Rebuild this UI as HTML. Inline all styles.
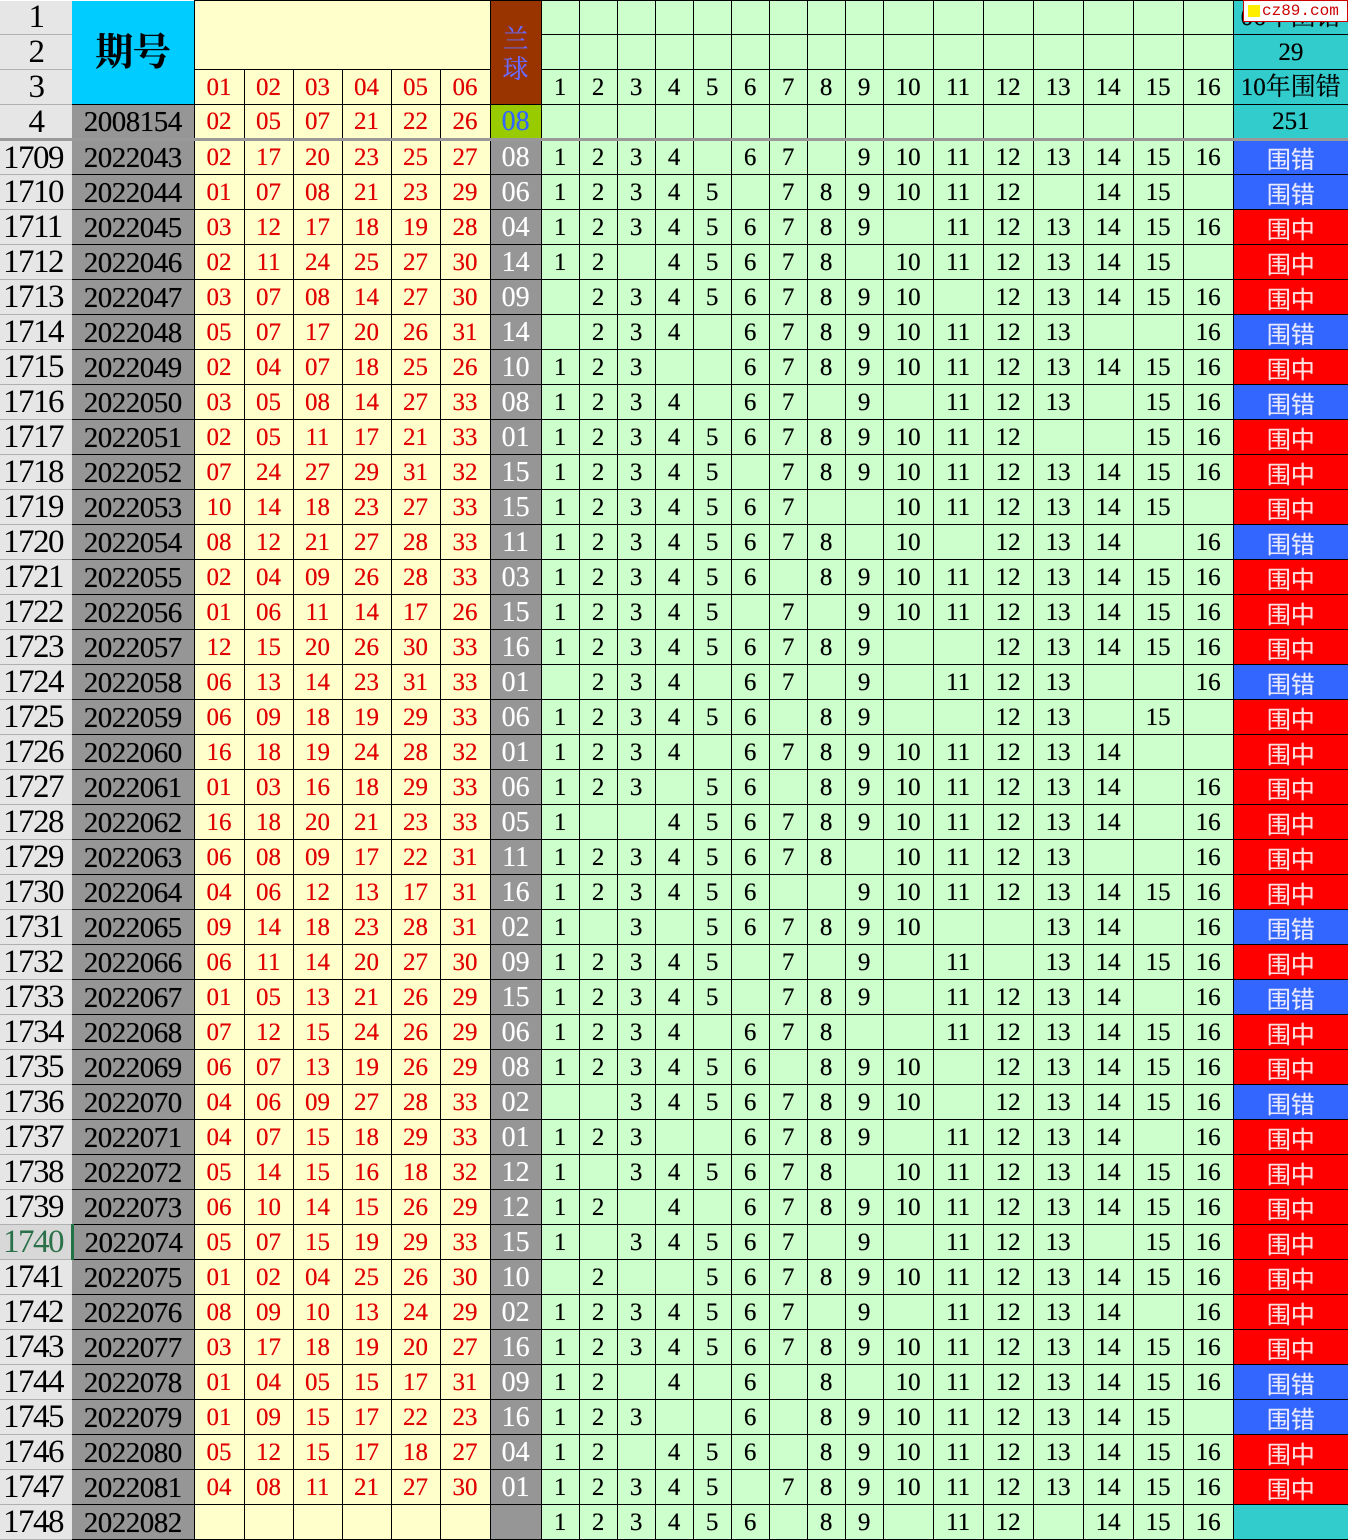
<!DOCTYPE html>
<html><head><meta charset="utf-8"><style>
*{margin:0;padding:0;box-sizing:border-box}
body{width:1348px;height:1539px;overflow:hidden;background:#fff;position:relative;font-family:"Liberation Serif","Noto Serif CJK SC",serif}
table{border-collapse:collapse;table-layout:fixed;width:1348px}
td{border:1px solid #000;text-align:center;font-size:25px;height:35px;line-height:32px;white-space:nowrap;overflow:hidden;padding:0;padding-top:1px;text-shadow:0 0 .4px currentColor}
tr.r1 td{height:33px}
td.rh{background:#e6e6e6;border:none;border-bottom:1px solid #b0b0b0;font-size:33px;color:#000;text-align:left;padding-left:3px;letter-spacing:-1.5px;line-height:30px;text-shadow:none;padding-top:0}
td.rhc{text-align:center;padding-left:0}
td.qh{background:#969696;color:#000;font-size:29px;border-left:none;letter-spacing:-0.5px}
td.qht{background:#00ccff;font-size:38px;font-family:"Liberation Serif","Noto Serif CJK SC",serif;font-weight:bold;border:none;line-height:40px}
td.y{background:#ffffcc;color:#e00000}
td.bl{background:#969696;color:#fff;font-size:28px}
td.blh{background:#993300;color:#6b6bff;font-size:26px;line-height:30px;font-family:"Noto Serif CJK SC",serif}
td.blg{background:#99cc00;color:#3366ff;font-size:28px}
td.g{background:#ccffcc;color:#000}
td.t{background:#33cccc;color:#000;font-size:25px;border-right:none}
td.b{background:#3366ff;color:#e8e8ff;font-family:"Noto Sans CJK SC",sans-serif;font-size:24px;border-right:none;line-height:30px}
td.r{background:#ff0000;color:#ffe0e0;font-family:"Noto Sans CJK SC",sans-serif;font-size:24px;border-right:none;line-height:30px}
tr.sep td{border-top:3px solid #999}
.wm{position:absolute;left:1243px;top:0;width:105px;height:22px;background:#fff;border:1px solid #c00;color:#c00;font-size:16px;line-height:20px;font-family:"Liberation Mono",monospace;padding-left:18px;white-space:nowrap}
.wm i{position:absolute;left:4px;top:4px;width:12px;height:12px;background:#ffee00}
</style></head><body>
<table>
<colgroup><col style="width:72px"><col style="width:122px"><col style="width:50px"><col style="width:49px"><col style="width:49px"><col style="width:49px"><col style="width:49px"><col style="width:50px"><col style="width:51px"><col style="width:38px"><col style="width:38px"><col style="width:38px"><col style="width:38px"><col style="width:38px"><col style="width:38px"><col style="width:38px"><col style="width:38px"><col style="width:38px"><col style="width:50px"><col style="width:50px"><col style="width:50px"><col style="width:50px"><col style="width:50px"><col style="width:50px"><col style="width:50px"><col style="width:115px"></colgroup>
<tr class="r1"><td class="rh rhc">1</td><td class="qh qht" rowspan="3">期号</td><td class="y" colspan="6" rowspan="2" style="border-bottom:1px solid #000"></td><td class="blh" rowspan="3">兰<br>球</td><td class="g"></td><td class="g"></td><td class="g"></td><td class="g"></td><td class="g"></td><td class="g"></td><td class="g"></td><td class="g"></td><td class="g"></td><td class="g"></td><td class="g"></td><td class="g"></td><td class="g"></td><td class="g"></td><td class="g"></td><td class="g"></td><td class="t">06年围错</td></tr>
<tr><td class="rh rhc">2</td><td class="g"></td><td class="g"></td><td class="g"></td><td class="g"></td><td class="g"></td><td class="g"></td><td class="g"></td><td class="g"></td><td class="g"></td><td class="g"></td><td class="g"></td><td class="g"></td><td class="g"></td><td class="g"></td><td class="g"></td><td class="g"></td><td class="t">29</td></tr>
<tr><td class="rh rhc">3</td><td class="y">01</td><td class="y">02</td><td class="y">03</td><td class="y">04</td><td class="y">05</td><td class="y">06</td><td class="g">1</td><td class="g">2</td><td class="g">3</td><td class="g">4</td><td class="g">5</td><td class="g">6</td><td class="g">7</td><td class="g">8</td><td class="g">9</td><td class="g">10</td><td class="g">11</td><td class="g">12</td><td class="g">13</td><td class="g">14</td><td class="g">15</td><td class="g">16</td><td class="t" style="font-family:'Liberation Serif','Noto Serif CJK SC',serif">10年围错</td></tr>
<tr><td class="rh rhc">4</td><td class="qh">2008154</td><td class="y">02</td><td class="y">05</td><td class="y">07</td><td class="y">21</td><td class="y">22</td><td class="y">26</td><td class="blg">08</td><td class="g"></td><td class="g"></td><td class="g"></td><td class="g"></td><td class="g"></td><td class="g"></td><td class="g"></td><td class="g"></td><td class="g"></td><td class="g"></td><td class="g"></td><td class="g"></td><td class="g"></td><td class="g"></td><td class="g"></td><td class="g"></td><td class="t">251</td></tr>
<tbody id="d">
<tr class="sep"><td class="rh">1709</td><td class="qh">2022043</td><td class="y">02</td><td class="y">17</td><td class="y">20</td><td class="y">23</td><td class="y">25</td><td class="y">27</td><td class="bl">08</td><td class="g">1</td><td class="g">2</td><td class="g">3</td><td class="g">4</td><td class="g"></td><td class="g">6</td><td class="g">7</td><td class="g"></td><td class="g">9</td><td class="g">10</td><td class="g">11</td><td class="g">12</td><td class="g">13</td><td class="g">14</td><td class="g">15</td><td class="g">16</td><td class="b">围错</td></tr>
<tr><td class="rh">1710</td><td class="qh">2022044</td><td class="y">01</td><td class="y">07</td><td class="y">08</td><td class="y">21</td><td class="y">23</td><td class="y">29</td><td class="bl">06</td><td class="g">1</td><td class="g">2</td><td class="g">3</td><td class="g">4</td><td class="g">5</td><td class="g"></td><td class="g">7</td><td class="g">8</td><td class="g">9</td><td class="g">10</td><td class="g">11</td><td class="g">12</td><td class="g"></td><td class="g">14</td><td class="g">15</td><td class="g"></td><td class="b">围错</td></tr>
<tr><td class="rh">1711</td><td class="qh">2022045</td><td class="y">03</td><td class="y">12</td><td class="y">17</td><td class="y">18</td><td class="y">19</td><td class="y">28</td><td class="bl">04</td><td class="g">1</td><td class="g">2</td><td class="g">3</td><td class="g">4</td><td class="g">5</td><td class="g">6</td><td class="g">7</td><td class="g">8</td><td class="g">9</td><td class="g"></td><td class="g">11</td><td class="g">12</td><td class="g">13</td><td class="g">14</td><td class="g">15</td><td class="g">16</td><td class="r">围中</td></tr>
<tr><td class="rh">1712</td><td class="qh">2022046</td><td class="y">02</td><td class="y">11</td><td class="y">24</td><td class="y">25</td><td class="y">27</td><td class="y">30</td><td class="bl">14</td><td class="g">1</td><td class="g">2</td><td class="g"></td><td class="g">4</td><td class="g">5</td><td class="g">6</td><td class="g">7</td><td class="g">8</td><td class="g"></td><td class="g">10</td><td class="g">11</td><td class="g">12</td><td class="g">13</td><td class="g">14</td><td class="g">15</td><td class="g"></td><td class="r">围中</td></tr>
<tr><td class="rh">1713</td><td class="qh">2022047</td><td class="y">03</td><td class="y">07</td><td class="y">08</td><td class="y">14</td><td class="y">27</td><td class="y">30</td><td class="bl">09</td><td class="g"></td><td class="g">2</td><td class="g">3</td><td class="g">4</td><td class="g">5</td><td class="g">6</td><td class="g">7</td><td class="g">8</td><td class="g">9</td><td class="g">10</td><td class="g"></td><td class="g">12</td><td class="g">13</td><td class="g">14</td><td class="g">15</td><td class="g">16</td><td class="r">围中</td></tr>
<tr><td class="rh">1714</td><td class="qh">2022048</td><td class="y">05</td><td class="y">07</td><td class="y">17</td><td class="y">20</td><td class="y">26</td><td class="y">31</td><td class="bl">14</td><td class="g"></td><td class="g">2</td><td class="g">3</td><td class="g">4</td><td class="g"></td><td class="g">6</td><td class="g">7</td><td class="g">8</td><td class="g">9</td><td class="g">10</td><td class="g">11</td><td class="g">12</td><td class="g">13</td><td class="g"></td><td class="g"></td><td class="g">16</td><td class="b">围错</td></tr>
<tr><td class="rh">1715</td><td class="qh">2022049</td><td class="y">02</td><td class="y">04</td><td class="y">07</td><td class="y">18</td><td class="y">25</td><td class="y">26</td><td class="bl">10</td><td class="g">1</td><td class="g">2</td><td class="g">3</td><td class="g"></td><td class="g"></td><td class="g">6</td><td class="g">7</td><td class="g">8</td><td class="g">9</td><td class="g">10</td><td class="g">11</td><td class="g">12</td><td class="g">13</td><td class="g">14</td><td class="g">15</td><td class="g">16</td><td class="r">围中</td></tr>
<tr><td class="rh">1716</td><td class="qh">2022050</td><td class="y">03</td><td class="y">05</td><td class="y">08</td><td class="y">14</td><td class="y">27</td><td class="y">33</td><td class="bl">08</td><td class="g">1</td><td class="g">2</td><td class="g">3</td><td class="g">4</td><td class="g"></td><td class="g">6</td><td class="g">7</td><td class="g"></td><td class="g">9</td><td class="g"></td><td class="g">11</td><td class="g">12</td><td class="g">13</td><td class="g"></td><td class="g">15</td><td class="g">16</td><td class="b">围错</td></tr>
<tr><td class="rh">1717</td><td class="qh">2022051</td><td class="y">02</td><td class="y">05</td><td class="y">11</td><td class="y">17</td><td class="y">21</td><td class="y">33</td><td class="bl">01</td><td class="g">1</td><td class="g">2</td><td class="g">3</td><td class="g">4</td><td class="g">5</td><td class="g">6</td><td class="g">7</td><td class="g">8</td><td class="g">9</td><td class="g">10</td><td class="g">11</td><td class="g">12</td><td class="g"></td><td class="g"></td><td class="g">15</td><td class="g">16</td><td class="r">围中</td></tr>
<tr><td class="rh">1718</td><td class="qh">2022052</td><td class="y">07</td><td class="y">24</td><td class="y">27</td><td class="y">29</td><td class="y">31</td><td class="y">32</td><td class="bl">15</td><td class="g">1</td><td class="g">2</td><td class="g">3</td><td class="g">4</td><td class="g">5</td><td class="g"></td><td class="g">7</td><td class="g">8</td><td class="g">9</td><td class="g">10</td><td class="g">11</td><td class="g">12</td><td class="g">13</td><td class="g">14</td><td class="g">15</td><td class="g">16</td><td class="r">围中</td></tr>
<tr><td class="rh">1719</td><td class="qh">2022053</td><td class="y">10</td><td class="y">14</td><td class="y">18</td><td class="y">23</td><td class="y">27</td><td class="y">33</td><td class="bl">15</td><td class="g">1</td><td class="g">2</td><td class="g">3</td><td class="g">4</td><td class="g">5</td><td class="g">6</td><td class="g">7</td><td class="g"></td><td class="g"></td><td class="g">10</td><td class="g">11</td><td class="g">12</td><td class="g">13</td><td class="g">14</td><td class="g">15</td><td class="g"></td><td class="r">围中</td></tr>
<tr><td class="rh">1720</td><td class="qh">2022054</td><td class="y">08</td><td class="y">12</td><td class="y">21</td><td class="y">27</td><td class="y">28</td><td class="y">33</td><td class="bl">11</td><td class="g">1</td><td class="g">2</td><td class="g">3</td><td class="g">4</td><td class="g">5</td><td class="g">6</td><td class="g">7</td><td class="g">8</td><td class="g"></td><td class="g">10</td><td class="g"></td><td class="g">12</td><td class="g">13</td><td class="g">14</td><td class="g"></td><td class="g">16</td><td class="b">围错</td></tr>
<tr><td class="rh">1721</td><td class="qh">2022055</td><td class="y">02</td><td class="y">04</td><td class="y">09</td><td class="y">26</td><td class="y">28</td><td class="y">33</td><td class="bl">03</td><td class="g">1</td><td class="g">2</td><td class="g">3</td><td class="g">4</td><td class="g">5</td><td class="g">6</td><td class="g"></td><td class="g">8</td><td class="g">9</td><td class="g">10</td><td class="g">11</td><td class="g">12</td><td class="g">13</td><td class="g">14</td><td class="g">15</td><td class="g">16</td><td class="r">围中</td></tr>
<tr><td class="rh">1722</td><td class="qh">2022056</td><td class="y">01</td><td class="y">06</td><td class="y">11</td><td class="y">14</td><td class="y">17</td><td class="y">26</td><td class="bl">15</td><td class="g">1</td><td class="g">2</td><td class="g">3</td><td class="g">4</td><td class="g">5</td><td class="g"></td><td class="g">7</td><td class="g"></td><td class="g">9</td><td class="g">10</td><td class="g">11</td><td class="g">12</td><td class="g">13</td><td class="g">14</td><td class="g">15</td><td class="g">16</td><td class="r">围中</td></tr>
<tr><td class="rh">1723</td><td class="qh">2022057</td><td class="y">12</td><td class="y">15</td><td class="y">20</td><td class="y">26</td><td class="y">30</td><td class="y">33</td><td class="bl">16</td><td class="g">1</td><td class="g">2</td><td class="g">3</td><td class="g">4</td><td class="g">5</td><td class="g">6</td><td class="g">7</td><td class="g">8</td><td class="g">9</td><td class="g"></td><td class="g"></td><td class="g">12</td><td class="g">13</td><td class="g">14</td><td class="g">15</td><td class="g">16</td><td class="r">围中</td></tr>
<tr><td class="rh">1724</td><td class="qh">2022058</td><td class="y">06</td><td class="y">13</td><td class="y">14</td><td class="y">23</td><td class="y">31</td><td class="y">33</td><td class="bl">01</td><td class="g"></td><td class="g">2</td><td class="g">3</td><td class="g">4</td><td class="g"></td><td class="g">6</td><td class="g">7</td><td class="g"></td><td class="g">9</td><td class="g"></td><td class="g">11</td><td class="g">12</td><td class="g">13</td><td class="g"></td><td class="g"></td><td class="g">16</td><td class="b">围错</td></tr>
<tr><td class="rh">1725</td><td class="qh">2022059</td><td class="y">06</td><td class="y">09</td><td class="y">18</td><td class="y">19</td><td class="y">29</td><td class="y">33</td><td class="bl">06</td><td class="g">1</td><td class="g">2</td><td class="g">3</td><td class="g">4</td><td class="g">5</td><td class="g">6</td><td class="g"></td><td class="g">8</td><td class="g">9</td><td class="g"></td><td class="g"></td><td class="g">12</td><td class="g">13</td><td class="g"></td><td class="g">15</td><td class="g"></td><td class="r">围中</td></tr>
<tr><td class="rh">1726</td><td class="qh">2022060</td><td class="y">16</td><td class="y">18</td><td class="y">19</td><td class="y">24</td><td class="y">28</td><td class="y">32</td><td class="bl">01</td><td class="g">1</td><td class="g">2</td><td class="g">3</td><td class="g">4</td><td class="g"></td><td class="g">6</td><td class="g">7</td><td class="g">8</td><td class="g">9</td><td class="g">10</td><td class="g">11</td><td class="g">12</td><td class="g">13</td><td class="g">14</td><td class="g"></td><td class="g"></td><td class="r">围中</td></tr>
<tr><td class="rh">1727</td><td class="qh">2022061</td><td class="y">01</td><td class="y">03</td><td class="y">16</td><td class="y">18</td><td class="y">29</td><td class="y">33</td><td class="bl">06</td><td class="g">1</td><td class="g">2</td><td class="g">3</td><td class="g"></td><td class="g">5</td><td class="g">6</td><td class="g"></td><td class="g">8</td><td class="g">9</td><td class="g">10</td><td class="g">11</td><td class="g">12</td><td class="g">13</td><td class="g">14</td><td class="g"></td><td class="g">16</td><td class="r">围中</td></tr>
<tr><td class="rh">1728</td><td class="qh">2022062</td><td class="y">16</td><td class="y">18</td><td class="y">20</td><td class="y">21</td><td class="y">23</td><td class="y">33</td><td class="bl">05</td><td class="g">1</td><td class="g"></td><td class="g"></td><td class="g">4</td><td class="g">5</td><td class="g">6</td><td class="g">7</td><td class="g">8</td><td class="g">9</td><td class="g">10</td><td class="g">11</td><td class="g">12</td><td class="g">13</td><td class="g">14</td><td class="g"></td><td class="g">16</td><td class="r">围中</td></tr>
<tr><td class="rh">1729</td><td class="qh">2022063</td><td class="y">06</td><td class="y">08</td><td class="y">09</td><td class="y">17</td><td class="y">22</td><td class="y">31</td><td class="bl">11</td><td class="g">1</td><td class="g">2</td><td class="g">3</td><td class="g">4</td><td class="g">5</td><td class="g">6</td><td class="g">7</td><td class="g">8</td><td class="g"></td><td class="g">10</td><td class="g">11</td><td class="g">12</td><td class="g">13</td><td class="g"></td><td class="g"></td><td class="g">16</td><td class="r">围中</td></tr>
<tr><td class="rh">1730</td><td class="qh">2022064</td><td class="y">04</td><td class="y">06</td><td class="y">12</td><td class="y">13</td><td class="y">17</td><td class="y">31</td><td class="bl">16</td><td class="g">1</td><td class="g">2</td><td class="g">3</td><td class="g">4</td><td class="g">5</td><td class="g">6</td><td class="g"></td><td class="g"></td><td class="g">9</td><td class="g">10</td><td class="g">11</td><td class="g">12</td><td class="g">13</td><td class="g">14</td><td class="g">15</td><td class="g">16</td><td class="r">围中</td></tr>
<tr><td class="rh">1731</td><td class="qh">2022065</td><td class="y">09</td><td class="y">14</td><td class="y">18</td><td class="y">23</td><td class="y">28</td><td class="y">31</td><td class="bl">02</td><td class="g">1</td><td class="g"></td><td class="g">3</td><td class="g"></td><td class="g">5</td><td class="g">6</td><td class="g">7</td><td class="g">8</td><td class="g">9</td><td class="g">10</td><td class="g"></td><td class="g"></td><td class="g">13</td><td class="g">14</td><td class="g"></td><td class="g">16</td><td class="b">围错</td></tr>
<tr><td class="rh">1732</td><td class="qh">2022066</td><td class="y">06</td><td class="y">11</td><td class="y">14</td><td class="y">20</td><td class="y">27</td><td class="y">30</td><td class="bl">09</td><td class="g">1</td><td class="g">2</td><td class="g">3</td><td class="g">4</td><td class="g">5</td><td class="g"></td><td class="g">7</td><td class="g"></td><td class="g">9</td><td class="g"></td><td class="g">11</td><td class="g"></td><td class="g">13</td><td class="g">14</td><td class="g">15</td><td class="g">16</td><td class="r">围中</td></tr>
<tr><td class="rh">1733</td><td class="qh">2022067</td><td class="y">01</td><td class="y">05</td><td class="y">13</td><td class="y">21</td><td class="y">26</td><td class="y">29</td><td class="bl">15</td><td class="g">1</td><td class="g">2</td><td class="g">3</td><td class="g">4</td><td class="g">5</td><td class="g"></td><td class="g">7</td><td class="g">8</td><td class="g">9</td><td class="g"></td><td class="g">11</td><td class="g">12</td><td class="g">13</td><td class="g">14</td><td class="g"></td><td class="g">16</td><td class="b">围错</td></tr>
<tr><td class="rh">1734</td><td class="qh">2022068</td><td class="y">07</td><td class="y">12</td><td class="y">15</td><td class="y">24</td><td class="y">26</td><td class="y">29</td><td class="bl">06</td><td class="g">1</td><td class="g">2</td><td class="g">3</td><td class="g">4</td><td class="g"></td><td class="g">6</td><td class="g">7</td><td class="g">8</td><td class="g"></td><td class="g"></td><td class="g">11</td><td class="g">12</td><td class="g">13</td><td class="g">14</td><td class="g">15</td><td class="g">16</td><td class="r">围中</td></tr>
<tr><td class="rh">1735</td><td class="qh">2022069</td><td class="y">06</td><td class="y">07</td><td class="y">13</td><td class="y">19</td><td class="y">26</td><td class="y">29</td><td class="bl">08</td><td class="g">1</td><td class="g">2</td><td class="g">3</td><td class="g">4</td><td class="g">5</td><td class="g">6</td><td class="g"></td><td class="g">8</td><td class="g">9</td><td class="g">10</td><td class="g"></td><td class="g">12</td><td class="g">13</td><td class="g">14</td><td class="g">15</td><td class="g">16</td><td class="r">围中</td></tr>
<tr><td class="rh">1736</td><td class="qh">2022070</td><td class="y">04</td><td class="y">06</td><td class="y">09</td><td class="y">27</td><td class="y">28</td><td class="y">33</td><td class="bl">02</td><td class="g"></td><td class="g"></td><td class="g">3</td><td class="g">4</td><td class="g">5</td><td class="g">6</td><td class="g">7</td><td class="g">8</td><td class="g">9</td><td class="g">10</td><td class="g"></td><td class="g">12</td><td class="g">13</td><td class="g">14</td><td class="g">15</td><td class="g">16</td><td class="b">围错</td></tr>
<tr><td class="rh">1737</td><td class="qh">2022071</td><td class="y">04</td><td class="y">07</td><td class="y">15</td><td class="y">18</td><td class="y">29</td><td class="y">33</td><td class="bl">01</td><td class="g">1</td><td class="g">2</td><td class="g">3</td><td class="g"></td><td class="g"></td><td class="g">6</td><td class="g">7</td><td class="g">8</td><td class="g">9</td><td class="g"></td><td class="g">11</td><td class="g">12</td><td class="g">13</td><td class="g">14</td><td class="g"></td><td class="g">16</td><td class="r">围中</td></tr>
<tr><td class="rh">1738</td><td class="qh">2022072</td><td class="y">05</td><td class="y">14</td><td class="y">15</td><td class="y">16</td><td class="y">18</td><td class="y">32</td><td class="bl">12</td><td class="g">1</td><td class="g"></td><td class="g">3</td><td class="g">4</td><td class="g">5</td><td class="g">6</td><td class="g">7</td><td class="g">8</td><td class="g"></td><td class="g">10</td><td class="g">11</td><td class="g">12</td><td class="g">13</td><td class="g">14</td><td class="g">15</td><td class="g">16</td><td class="r">围中</td></tr>
<tr><td class="rh">1739</td><td class="qh">2022073</td><td class="y">06</td><td class="y">10</td><td class="y">14</td><td class="y">15</td><td class="y">26</td><td class="y">29</td><td class="bl">12</td><td class="g">1</td><td class="g">2</td><td class="g"></td><td class="g">4</td><td class="g"></td><td class="g">6</td><td class="g">7</td><td class="g">8</td><td class="g">9</td><td class="g">10</td><td class="g">11</td><td class="g">12</td><td class="g">13</td><td class="g">14</td><td class="g">15</td><td class="g">16</td><td class="r">围中</td></tr>
<tr><td class="rh" style="color:#2a7048;border-right:3px solid #217346;background:#d8d8d8">1740</td><td class="qh">2022074</td><td class="y">05</td><td class="y">07</td><td class="y">15</td><td class="y">19</td><td class="y">29</td><td class="y">33</td><td class="bl">15</td><td class="g">1</td><td class="g"></td><td class="g">3</td><td class="g">4</td><td class="g">5</td><td class="g">6</td><td class="g">7</td><td class="g"></td><td class="g">9</td><td class="g"></td><td class="g">11</td><td class="g">12</td><td class="g">13</td><td class="g"></td><td class="g">15</td><td class="g">16</td><td class="r">围中</td></tr>
<tr><td class="rh">1741</td><td class="qh">2022075</td><td class="y">01</td><td class="y">02</td><td class="y">04</td><td class="y">25</td><td class="y">26</td><td class="y">30</td><td class="bl">10</td><td class="g"></td><td class="g">2</td><td class="g"></td><td class="g"></td><td class="g">5</td><td class="g">6</td><td class="g">7</td><td class="g">8</td><td class="g">9</td><td class="g">10</td><td class="g">11</td><td class="g">12</td><td class="g">13</td><td class="g">14</td><td class="g">15</td><td class="g">16</td><td class="r">围中</td></tr>
<tr><td class="rh">1742</td><td class="qh">2022076</td><td class="y">08</td><td class="y">09</td><td class="y">10</td><td class="y">13</td><td class="y">24</td><td class="y">29</td><td class="bl">02</td><td class="g">1</td><td class="g">2</td><td class="g">3</td><td class="g">4</td><td class="g">5</td><td class="g">6</td><td class="g">7</td><td class="g"></td><td class="g">9</td><td class="g"></td><td class="g">11</td><td class="g">12</td><td class="g">13</td><td class="g">14</td><td class="g"></td><td class="g">16</td><td class="r">围中</td></tr>
<tr><td class="rh">1743</td><td class="qh">2022077</td><td class="y">03</td><td class="y">17</td><td class="y">18</td><td class="y">19</td><td class="y">20</td><td class="y">27</td><td class="bl">16</td><td class="g">1</td><td class="g">2</td><td class="g">3</td><td class="g">4</td><td class="g">5</td><td class="g">6</td><td class="g">7</td><td class="g">8</td><td class="g">9</td><td class="g">10</td><td class="g">11</td><td class="g">12</td><td class="g">13</td><td class="g">14</td><td class="g">15</td><td class="g">16</td><td class="r">围中</td></tr>
<tr><td class="rh">1744</td><td class="qh">2022078</td><td class="y">01</td><td class="y">04</td><td class="y">05</td><td class="y">15</td><td class="y">17</td><td class="y">31</td><td class="bl">09</td><td class="g">1</td><td class="g">2</td><td class="g"></td><td class="g">4</td><td class="g"></td><td class="g">6</td><td class="g"></td><td class="g">8</td><td class="g"></td><td class="g">10</td><td class="g">11</td><td class="g">12</td><td class="g">13</td><td class="g">14</td><td class="g">15</td><td class="g">16</td><td class="b">围错</td></tr>
<tr><td class="rh">1745</td><td class="qh">2022079</td><td class="y">01</td><td class="y">09</td><td class="y">15</td><td class="y">17</td><td class="y">22</td><td class="y">23</td><td class="bl">16</td><td class="g">1</td><td class="g">2</td><td class="g">3</td><td class="g"></td><td class="g"></td><td class="g">6</td><td class="g"></td><td class="g">8</td><td class="g">9</td><td class="g">10</td><td class="g">11</td><td class="g">12</td><td class="g">13</td><td class="g">14</td><td class="g">15</td><td class="g"></td><td class="b">围错</td></tr>
<tr><td class="rh">1746</td><td class="qh">2022080</td><td class="y">05</td><td class="y">12</td><td class="y">15</td><td class="y">17</td><td class="y">18</td><td class="y">27</td><td class="bl">04</td><td class="g">1</td><td class="g">2</td><td class="g"></td><td class="g">4</td><td class="g">5</td><td class="g">6</td><td class="g"></td><td class="g">8</td><td class="g">9</td><td class="g">10</td><td class="g">11</td><td class="g">12</td><td class="g">13</td><td class="g">14</td><td class="g">15</td><td class="g">16</td><td class="r">围中</td></tr>
<tr><td class="rh">1747</td><td class="qh">2022081</td><td class="y">04</td><td class="y">08</td><td class="y">11</td><td class="y">21</td><td class="y">27</td><td class="y">30</td><td class="bl">01</td><td class="g">1</td><td class="g">2</td><td class="g">3</td><td class="g">4</td><td class="g">5</td><td class="g"></td><td class="g">7</td><td class="g">8</td><td class="g">9</td><td class="g">10</td><td class="g">11</td><td class="g">12</td><td class="g">13</td><td class="g">14</td><td class="g">15</td><td class="g">16</td><td class="r">围中</td></tr>
<tr><td class="rh">1748</td><td class="qh">2022082</td><td class="y"></td><td class="y"></td><td class="y"></td><td class="y"></td><td class="y"></td><td class="y"></td><td class="bl"></td><td class="g">1</td><td class="g">2</td><td class="g">3</td><td class="g">4</td><td class="g">5</td><td class="g">6</td><td class="g"></td><td class="g">8</td><td class="g">9</td><td class="g"></td><td class="g">11</td><td class="g">12</td><td class="g"></td><td class="g">14</td><td class="g">15</td><td class="g">16</td><td class="t"></td></tr>
</tbody></table>
<div class="wm"><i></i>cz89.com</div>
</body></html>
